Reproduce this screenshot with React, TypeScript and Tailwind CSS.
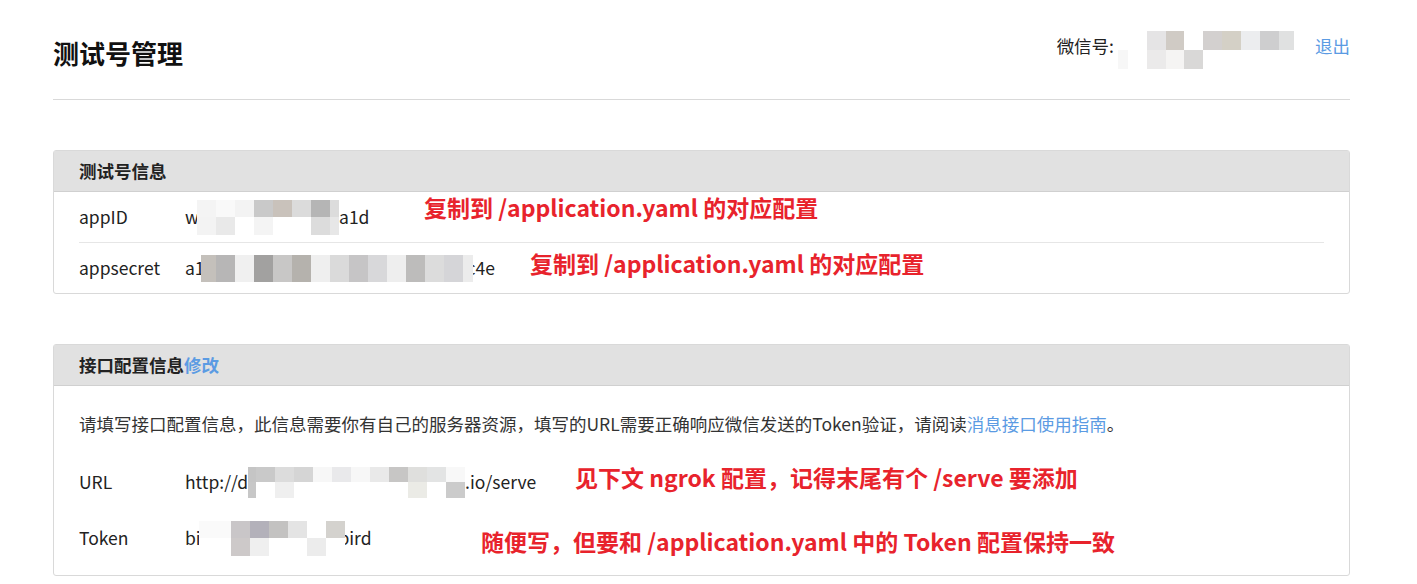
import React from 'react';

// mosaic cells: each string is the full class list of one cell
type Cells = string[][];

const HEAD_MOSAIC: Cells = [
  ['w-[29px]', 'w-[19px] bg-[#e5e4e5]', 'w-[18px] bg-[#d0cbc5]', 'w-[19px]', 'w-[19px] bg-[#d3d0cf]', 'w-[19px] bg-[#d4d0c6]', 'w-[19px] bg-[#ecedef]', 'w-[19px] bg-[#cececf]', 'w-[15px] bg-[#e0e1e1]'],
  ['w-[10px] bg-[#f7f7f7]', 'w-[19px]', 'w-[19px] bg-[#ebeaea]', 'w-[18px] bg-[#f5f4f3]', 'w-[19px] bg-[#d9d8d7]'],
];

const APPID_MOSAIC: Cells = [
  ['w-[19px] bg-[#f4f4f4]', 'w-[19px] bg-[#f9f9f9]', 'w-[19px] bg-[#f3f3f3]', 'w-[19px] bg-[#c9c9c9]', 'w-[19px] bg-[#c9c2bb]', 'w-[19px] bg-[#dbdbdb]', 'w-[19px] bg-[#b5b5b5]', 'w-[9px] bg-[#dcdcdc]'],
  ['w-[19px] bg-[#f3f3f3]', 'w-[19px] bg-[#e9e9e9]', 'w-[19px] bg-white', 'w-[19px] bg-[#f4f4f4]', 'w-[38px] bg-white', 'w-[19px] bg-[#dcdcdc]', 'w-[9px] bg-[#e7e7e7]'],
];

const SECRET_MOSAIC: Cells = [
  ['w-[15px] bg-[#c4c0bb]', 'w-[19px] bg-[#b7b6b6]', 'w-[19px] bg-[#f0f0f0]', 'w-[19px] bg-[#a2a1a0]', 'w-[19px] bg-[#c8c7c6]', 'w-[19px] bg-[#b5b2ad]', 'w-[19px] bg-[#efefef]', 'w-[19px] bg-[#dadada]', 'w-[19px] bg-[#c6c5c6]', 'w-[19px] bg-[#d8d8da]', 'w-[19px] bg-[#eeeeee]', 'w-[19px] bg-[#bdbcbb]', 'w-[19px] bg-[#dcdcdc]', 'w-[19px] bg-[#d5d5d8]', 'w-[10px] bg-[#ececec]'],
];

const URL_MOSAIC: Cells = [
  ['w-[8px] bg-[#c5c5c5]', 'w-[19px] bg-[#c9c9c9]', 'w-[19px] bg-[#dcdcdc]', 'w-[19px] bg-[#d5d5d5]', 'w-[19px] bg-[#f7f7f7]', 'w-[19px] bg-[#e9e9eb]', 'w-[19px] bg-[#f7f7f7]', 'w-[19px] bg-[#e9e9e9]', 'w-[19px] bg-[#c7c6c5]', 'w-[19px] bg-[#dfdfdd]', 'w-[19px] bg-[#e3e4e4]', 'w-[19px] bg-[#f8f8f8]'],
  ['w-[8px] bg-[#c7c7c7]', 'w-[19px] bg-white', 'w-[19px] bg-[#efefef]', 'w-[114px] bg-white', 'w-[19px] bg-[#ebebe6]', 'w-[19px] bg-white', 'w-[19px] bg-[#cbcbcb]'],
];

const TOKEN_MOSAIC: Cells = [
  ['w-[32px] bg-[#fafafa]', 'w-[19px] bg-[#c9c6c8]', 'w-[19px] bg-[#b3b1ba]', 'w-[19px] bg-[#c3c2c1]', 'w-[19px] bg-[#e4e4e4]', 'w-[19px] bg-white', 'w-[19px] bg-[#d4d2ce]'],
  ['w-[32px] bg-white', 'w-[19px] bg-[#cdc9c9]', 'w-[19px] bg-[#efefef]', 'w-[38px] bg-white', 'w-[19px] bg-[#ececec]', 'w-[19px] bg-white'],
];

function Mosaic({ cells, rowH, className = '' }: { cells: Cells; rowH: string; className?: string }) {
  return (
    <span className={`relative z-10 inline-flex flex-col align-middle ${className}`}>
      {cells.map((row, i) => (
        <span key={i} className={`flex ${rowH}`}>
          {row.map((c, j) => (
            <span key={j} className={`shrink-0 ${c}`} />
          ))}
        </span>
      ))}
    </span>
  );
}

function Note({ children, className }: { children: React.ReactNode; className: string }) {
  return (
    <span className={`absolute whitespace-nowrap text-[23px] font-bold leading-none text-[#e8232c] ${className}`}>
      {children}
    </span>
  );
}

export default function App() {
  return (
    <div className="min-h-[584px] bg-white font-['Noto_Sans_CJK_SC','Noto_Sans',sans-serif] text-[17.5px] text-[#222]">
      <div className="ml-[53px] w-[1297px]">
        {/* HEADER */}
        <div className="flex h-[100px] items-start justify-between border-b border-[#d9d9d9]">
          <h1 className="pt-[35px] text-[26px] font-bold leading-[36px] text-[#111]">测试号管理</h1>
          <div className="flex items-start pt-[31px] text-[17.5px] leading-[30px]">
            <span>微信号:</span>
            <Mosaic cells={HEAD_MOSAIC} rowH="h-[19px]" className="ml-[4px]" />
            <a className="ml-[21px] text-[#5b9be3]">退出</a>
          </div>
        </div>

        {/* 测试号信息 */}
        <section className="mt-[50px] rounded-[3px] border border-[#d9d9d9]">
          <div className="flex h-[41px] items-center border-b border-[#d0d0d0] bg-[#e1e1e1] px-[25px] font-bold">
            测试号信息
          </div>
          <div className="px-[25px]">
            <div className="relative flex h-[51px] items-center border-b border-[#e6e6e6]">
              <span className="w-[106px]">appID</span>
              <span className="flex items-center">
                w<Mosaic cells={APPID_MOSAIC} rowH="h-[17.5px]" className="-ml-[2px]" />a1d
              </span>
              <Note className="left-[345px] top-[4px]">复制到 /application.yaml 的对应配置</Note>
            </div>
            <div className="relative flex h-[50px] items-center">
              <span className="w-[106px]">appsecret</span>
              <span className="flex items-center">
                a1<Mosaic cells={SECRET_MOSAIC} rowH="h-[27px]" className="-ml-[4px] -mr-[6px]" />c4e
              </span>
              <Note className="left-[451px] top-[9px]">复制到 /application.yaml 的对应配置</Note>
            </div>
          </div>
        </section>

        {/* 接口配置信息 */}
        <section className="mt-[50px] rounded-[3px] border border-[#d9d9d9]">
          <div className="flex h-[41px] items-center border-b border-[#d0d0d0] bg-[#e1e1e1] px-[25px] font-bold">
            接口配置信息<a className="text-[#5b9be3]">修改</a>
          </div>
          <div className="px-[25px] pb-[9px] pt-[24px]">
            <p className="leading-[28px] text-[#333]">
              请填写接口配置信息，此信息需要你有自己的服务器资源，填写的URL需要正确响应微信发送的Token验证，请阅读
              <a className="text-[#5b9be3]">消息接口使用指南</a>。
            </p>
            <div className="relative mt-[16px] flex h-[56px] items-center">
              <span className="w-[106px]">URL</span>
              <span className="flex items-center">
                http://d<Mosaic cells={URL_MOSAIC} rowH="h-[15.5px]" />.io/serve
              </span>
              <Note className="left-[496px] top-[12px]">见下文 ngrok 配置，记得末尾有个 /serve 要添加</Note>
            </div>
            <div className="relative flex h-[56px] items-center">
              <span className="w-[106px]">Token</span>
              <span className="flex items-center">
                bir<Mosaic cells={TOKEN_MOSAIC} rowH="h-[17.5px]" className="-ml-[8px] -mr-[7px]" />bird
              </span>
              <Note className="left-[402px] top-[20px]">随便写，但要和 /application.yaml 中的 Token 配置保持一致</Note>
            </div>
          </div>
        </section>
      </div>
    </div>
  );
}
